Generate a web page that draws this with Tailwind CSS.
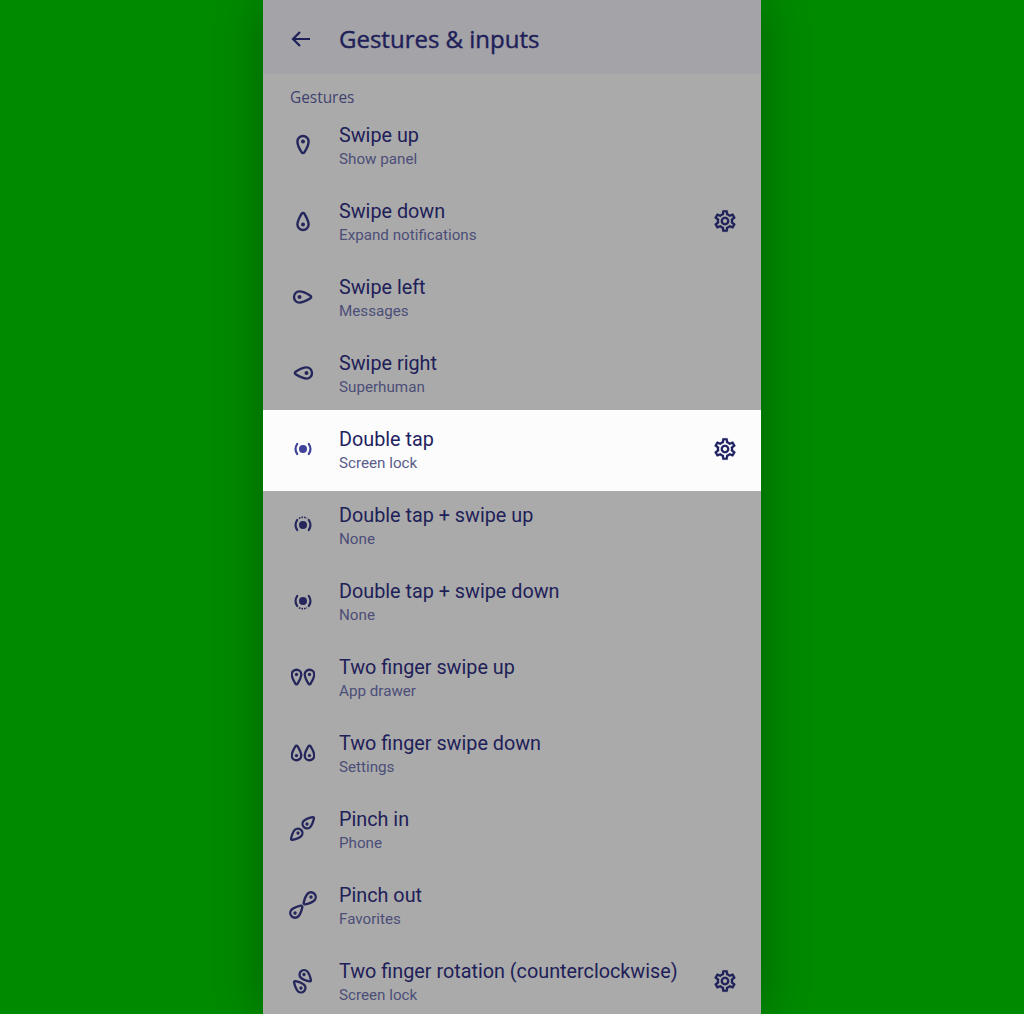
<!DOCTYPE html>
<html lang="en">
  <head>
    <meta charset="UTF-8" />
    <title>Gestures &amp; inputs</title>
    <script src="https://cdn.jsdelivr.net/npm/@tailwindcss/browser@4"></script>
  </head>
  <body class="h-[1014px] overflow-hidden bg-[#008a00] font-['Roboto',sans-serif]">
    <svg class="hidden">
      <defs>
        <g id="pin">
          <path d="M12 3c3.100 0 5.600 2.400 5.600 5.400 0 3.200-2.800 8.600-4.300 11-.6 1-2 1-2.600 0-1.500-2.400-4.300-7.800-4.300-11C6.400 5.400 8.900 3 12 3z" fill="none" stroke="currentColor" />
          <circle cx="12" cy="8.500" r="2" fill="currentColor" />
        </g>
        <g id="tap">
          <circle cx="12" cy="12" r="4" fill="currentColor" />
          <path d="M6.200 7a9 9 0 0 0 0 10M17.800 7a9 9 0 0 1 0 10" fill="none" stroke="currentColor" stroke-width="2.200" stroke-linecap="round" />
        </g>
        <path id="gear" fill="currentColor" stroke="currentColor" stroke-width="0.150" d="M19.430 12.980c.04-.32.07-.64.07-.98 0-.34-.03-.66-.07-.98l2.110-1.650c.19-.15.24-.42.12-.64l-2-3.460c-.09-.16-.26-.25-.44-.25-.06 0-.12.01-.17.03l-2.490 1c-.52-.4-1.080-.73-1.690-.98l-.38-2.650C14.460 2.180 14.250 2 14 2h-4c-.25 0-.46.18-.49.42l-.38 2.650c-.61.25-1.170.59-1.690.98l-2.490-1c-.06-.02-.12-.03-.18-.03-.17 0-.34.09-.43.25l-2 3.460c-.13.22-.07.49.12.64l2.110 1.650c-.04.32-.07.65-.07.98 0 .33.03.66.07.98l-2.110 1.650c-.19.15-.24.42-.12.64l2 3.460c.09.16.26.25.44.25.06 0 .12-.01.17-.03l2.490-1c.52.4 1.080.73 1.690.98l.38 2.650c.03.24.24.42.49.42h4c.25 0 .46-.18.49-.42l.38-2.650c.61-.25 1.170-.59 1.690-.98l2.490 1c.06.02.12.03.18.03.17 0 .34-.09.43-.25l2-3.460c.12-.22.07-.49-.12-.64l-2.110-1.650zm-1.980-1.710c.04.31.05.52.05.73 0 .21-.02.43-.05.73l-.14 1.130.89.7 1.080.84-.7 1.210-1.270-.51-1.040-.42-.9.68c-.43.32-.84.56-1.250.73l-1.060.43-.16 1.130-.2 1.350h-1.400l-.19-1.350-.16-1.130-1.060-.43c-.43-.18-.83-.41-1.230-.71l-.91-.7-1.060.43-1.270.51-.7-1.210 1.080-.84.89-.7-.14-1.130c-.03-.31-.05-.54-.05-.74s.02-.43.05-.73l.14-1.130-.89-.7-1.080-.84.7-1.210 1.270.51 1.040.42.9-.68c.43-.32.84-.56 1.250-.73l1.060-.43.16-1.130.2-1.350h1.390l.19 1.350.16 1.130 1.060.43c.43.18.83.41 1.230.71l.91.7 1.060-.43 1.270-.51.7 1.210-1.070.85-.89.7.14 1.130zM12 8c-2.210 0-4 1.790-4 4s1.790 4 4 4 4-1.790 4-4-1.790-4-4-4zm0 6c-1.100 0-2-.9-2-2s.9-2 2-2 2 .9 2 2-.9 2-2 2z" />
      </defs>
    </svg>

    <div class="mx-auto h-[1014px] w-[498px] overflow-hidden bg-[#aaaaaa] shadow-[0_0_45px_rgba(0,0,0,0.3)]">
      <header class="flex h-[74px] items-center bg-[#a3a3a8] pl-[26px] pt-1">
        <svg class="h-6 w-6 text-[#1e2058]" viewBox="0 0 24 24">
          <path d="M21 12H4M11 5l-7 7 7 7" fill="none" stroke="currentColor" stroke-width="2.200" />
        </svg>
        <h1 class="ml-[26px] font-['Open_Sans',sans-serif] text-[24px] font-medium text-[#1e2058] [-webkit-text-stroke:0.4px_#1e2058]">Gestures &amp; inputs</h1>
      </header>

      <div class="flex h-[33px] items-center pl-[27px] pt-[15px] font-['Open_Sans',sans-serif] text-[15.4px] font-medium text-[#404270]">Gestures</div>

      <div class="flex h-[76px] items-center pl-[28px] pr-[24px]">
        <svg class="h-6 w-6 text-[#25275c]" stroke-width="2.400" viewBox="0 0 24 24"><use href="#pin" /></svg>
        <div class="ml-6 flex-1 pt-1">
          <div class="pt-px text-[19.8px] leading-[24px] text-[#1e2058]">Swipe up</div>
          <div class="-mt-px text-[15.2px] leading-[24px] text-[#4c4e78]">Show panel</div>
        </div>
      </div>

      <div class="flex h-[76px] items-center pl-[28px] pr-[24px]">
        <svg class="h-6 w-6 text-[#25275c]" stroke-width="2.400" viewBox="0 0 24 24"><use href="#pin" transform="rotate(180 12 12)" /></svg>
        <div class="ml-6 flex-1 pt-1">
          <div class="pt-px text-[19.8px] leading-[24px] text-[#1e2058]">Swipe down</div>
          <div class="-mt-px text-[15.2px] leading-[24px] text-[#4c4e78]">Expand notifications</div>
        </div>
        <svg class="-mr-px h-[26px] w-[26px] text-[#1e2058]" viewBox="0 0 24 24"><use href="#gear" /></svg>
      </div>

      <div class="flex h-[76px] items-center pl-[28px] pr-[24px]">
        <svg class="h-6 w-6 text-[#25275c]" stroke-width="2.400" viewBox="0 0 24 24"><use href="#pin" transform="rotate(-90 12 12)" /></svg>
        <div class="ml-6 flex-1 pt-1">
          <div class="pt-px text-[19.8px] leading-[24px] text-[#1e2058]">Swipe left</div>
          <div class="-mt-px text-[15.2px] leading-[24px] text-[#4c4e78]">Messages</div>
        </div>
      </div>

      <div class="flex h-[76px] items-center pl-[28px] pr-[24px]">
        <svg class="h-6 w-6 text-[#25275c]" stroke-width="2.400" viewBox="0 0 24 24"><use href="#pin" transform="rotate(90 12 12)" /></svg>
        <div class="ml-6 flex-1 pt-1">
          <div class="pt-px text-[19.8px] leading-[24px] text-[#1e2058]">Swipe right</div>
          <div class="-mt-px text-[15.2px] leading-[24px] text-[#4c4e78]">Superhuman</div>
        </div>
      </div>

      <div class="relative -mb-[4px] -mt-[1px] flex h-[81px] items-center bg-[#fcfcfd] pb-[3px] pl-[28px] pr-[24px]">
        <svg class="h-6 w-6 text-[#3f4296]" viewBox="0 0 24 24"><use href="#tap" /></svg>
        <div class="ml-6 flex-1 pt-1">
          <div class="pt-px text-[19.8px] leading-[24px] text-[#1f2260]">Double tap</div>
          <div class="-mt-px text-[15.2px] leading-[24px] text-[#5a5c8c]">Screen lock</div>
        </div>
        <svg class="-mr-px h-[26px] w-[26px] text-[#1f2260]" viewBox="0 0 24 24"><use href="#gear" /></svg>
      </div>

      <div class="flex h-[76px] items-center pl-[28px] pr-[24px]">
        <svg class="h-6 w-6 text-[#25275c]" viewBox="0 0 24 24">
          <use href="#tap" />
          <path d="M8 5.300a8 8 0 0 1 8 0" fill="none" stroke="currentColor" stroke-width="1.600" stroke-dasharray="1.600 1" />
        </svg>
        <div class="ml-6 flex-1 pt-1">
          <div class="pt-px text-[19.8px] leading-[24px] text-[#1e2058]">Double tap + swipe up</div>
          <div class="-mt-px text-[15.2px] leading-[24px] text-[#4c4e78]">None</div>
        </div>
      </div>

      <div class="flex h-[76px] items-center pl-[28px] pr-[24px]">
        <svg class="h-6 w-6 text-[#25275c]" viewBox="0 0 24 24">
          <use href="#tap" />
          <path d="M8 18.700a8 8 0 0 0 8 0" fill="none" stroke="currentColor" stroke-width="1.600" stroke-dasharray="1.600 1" />
        </svg>
        <div class="ml-6 flex-1 pt-1">
          <div class="pt-px text-[19.8px] leading-[24px] text-[#1e2058]">Double tap + swipe down</div>
          <div class="-mt-px text-[15.2px] leading-[24px] text-[#4c4e78]">None</div>
        </div>
      </div>

      <div class="flex h-[76px] items-center pl-[28px] pr-[24px]">
        <svg class="h-6 w-6 text-[#25275c]" stroke-width="2.700" viewBox="0 0 24 24">
          <use href="#pin" transform="translate(-4.700 2.200) scale(0.85)" />
          <use href="#pin" transform="translate(8.300 2.200) scale(0.85)" />
        </svg>
        <div class="ml-6 flex-1 pt-1">
          <div class="pt-px text-[19.8px] leading-[24px] text-[#1e2058]">Two finger swipe up</div>
          <div class="-mt-px text-[15.2px] leading-[24px] text-[#4c4e78]">App drawer</div>
        </div>
      </div>

      <div class="flex h-[76px] items-center pl-[28px] pr-[24px]">
        <svg class="h-6 w-6 text-[#25275c]" stroke-width="2.700" viewBox="0 0 24 24">
          <use href="#pin" transform="rotate(180 12 12) translate(-4.700 2.200) scale(0.85)" />
          <use href="#pin" transform="rotate(180 12 12) translate(8.300 2.200) scale(0.85)" />
        </svg>
        <div class="ml-6 flex-1 pt-1">
          <div class="pt-px text-[19.8px] leading-[24px] text-[#1e2058]">Two finger swipe down</div>
          <div class="-mt-px text-[15.2px] leading-[24px] text-[#4c4e78]">Settings</div>
        </div>
      </div>

      <div class="flex h-[76px] items-center pl-[28px] pr-[24px]">
        <svg class="-mx-[2px] h-7 w-7 text-[#25275c]" stroke-width="2.900" viewBox="0 0 28 28">
          <use href="#pin" transform="translate(18 9) rotate(225) scale(0.8) translate(-12 -8.500)" />
          <use href="#pin" transform="translate(9 18) rotate(45) scale(0.8) translate(-12 -8.500)" />
        </svg>
        <div class="ml-6 flex-1 pt-1">
          <div class="pt-px text-[19.8px] leading-[24px] text-[#1e2058]">Pinch in</div>
          <div class="-mt-px text-[15.2px] leading-[24px] text-[#4c4e78]">Phone</div>
        </div>
      </div>

      <div class="flex h-[76px] items-center pl-[28px] pr-[24px]">
        <svg class="-mx-[2px] h-7 w-7 text-[#25275c]" stroke-width="2.800" viewBox="0 0 28 28">
          <use href="#pin" transform="translate(22 6) rotate(45) scale(0.85) translate(-12 -8.500)" />
          <use href="#pin" transform="translate(6 22) rotate(225) scale(0.85) translate(-12 -8.500)" />
        </svg>
        <div class="ml-6 flex-1 pt-1">
          <div class="pt-px text-[19.8px] leading-[24px] text-[#1e2058]">Pinch out</div>
          <div class="-mt-px text-[15.2px] leading-[24px] text-[#4c4e78]">Favorites</div>
        </div>
      </div>

      <div class="flex h-[76px] items-center pl-[28px] pr-[24px]">
        <svg class="-mx-[2px] h-7 w-7 text-[#25275c]" stroke-width="2.900" viewBox="0 0 28 28">
          <use href="#pin" transform="translate(15 7.500) rotate(-45) scale(0.8) translate(-12 -8.500)" />
          <use href="#pin" transform="translate(12 21) rotate(135) scale(0.8) translate(-12 -8.500)" />
        </svg>
        <div class="ml-6 flex-1 pt-1">
          <div class="pt-px text-[19.8px] leading-[24px] text-[#1e2058]">Two finger rotation (counterclockwise)</div>
          <div class="-mt-px text-[15.2px] leading-[24px] text-[#4c4e78]">Screen lock</div>
        </div>
        <svg class="-mr-px h-[26px] w-[26px] text-[#1e2058]" viewBox="0 0 24 24"><use href="#gear" /></svg>
      </div>
    </div>
  </body>
</html>
